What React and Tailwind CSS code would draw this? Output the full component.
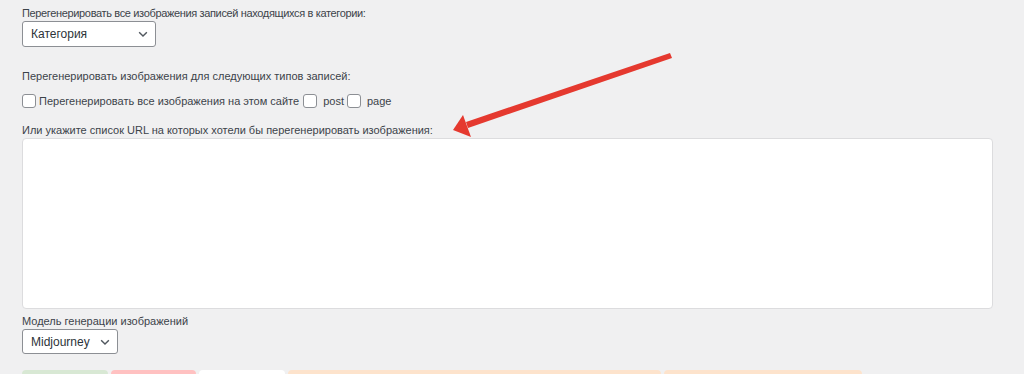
import React from "react";

const Chevron = () => (
  <svg width="14" height="14" viewBox="0 0 20 20" className="text-[#50575e]">
    <path d="M4.5 7.5l5.5 5.5 5.5-5.5" fill="none" stroke="currentColor" strokeWidth="2" />
  </svg>
);

const Select = ({ label, width, height }) => (
  <div
    className={`flex items-center justify-between rounded-[3px] border border-[#8c8f94] bg-white pl-[8px] pr-[5px] text-[12px] text-[#2c3338] ${width} ${height}`}
  >
    <span>{label}</span>
    <Chevron />
  </div>
);

const Checkbox = () => (
  <span className="inline-block h-[14px] w-[14px] shrink-0 rounded-[3px] border border-[#8c8f94] bg-white" />
);

export default function App() {
  return (
    <div className="relative h-[374px] w-[1024px] overflow-hidden bg-[#f0f0f1] pl-[22px] pt-[6px] font-['Liberation_Sans',sans-serif] text-[11px] text-[#3c434a]">
      {/* Категория */}
      <p className="h-[15px] leading-[15px] tracking-[-0.35px]">Перегенерировать все изображения записей находящихся в категории:</p>
      <Select label="Категория" width="w-[134px]" height="h-[26px]" />

      <p className="mt-[21px] h-[16px] leading-[16px]">Перегенерировать изображения для следующих типов записей:</p>
      <div className="mt-[9px] flex h-[16px] items-center leading-[16px]">
        <Checkbox />
        <span className="ml-[3px] mr-[4px]">Перегенерировать все изображения на этом сайте</span>
        <Checkbox />
        <span className="ml-[6px] mr-[3px]">post</span>
        <Checkbox />
        <span className="ml-[6px]">page</span>
      </div>

      <p className="mt-[13px] h-[16px] leading-[16px]">Или укажите список URL на которых хотели бы перегенерировать изображения:</p>
      <div className="h-[171px] w-[971px] rounded-[4px] border border-[#dcdcde] bg-white" />

      <p className="mt-[5px] h-[15px] leading-[15px]">Модель генерации изображений</p>
      <Select label="Midjourney" width="w-[96px]" height="h-[25px]" />

      {/* Кнопки внизу */}
      <div className="mt-[16px] flex gap-[3px]">
        <div className="h-[20px] w-[86px] rounded-[4px] bg-[#d8e8d4]" />
        <div className="h-[20px] w-[85px] rounded-[4px] bg-[#ffc1c1]" />
        <div className="h-[20px] w-[86px] rounded-[4px] bg-white" />
        <div className="h-[20px] w-[373px] rounded-[4px] bg-[#fde3cc]" />
        <div className="h-[20px] w-[198px] rounded-[4px] bg-[#fde3cc]" />
      </div>

      {/* Стрелка */}
      <svg className="absolute left-0 top-0" width="1024" height="374">
        <polygon points="670,53 672,58 468,128 466,122" fill="#e5392f" />
        <polygon points="453,130 463,115 471,137" fill="#e5392f" />
      </svg>
    </div>
  );
}
